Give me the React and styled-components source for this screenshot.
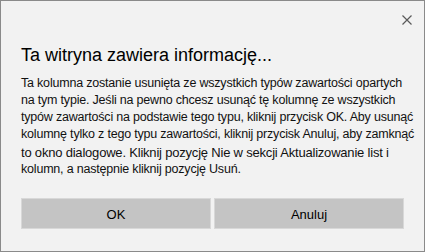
import React from 'react'
import styled, { createGlobalStyle } from 'styled-components'

const GlobalStyle = createGlobalStyle`
  html, body {
    margin: 0;
    padding: 0;
    background: #f2f2f2;
  }
  * {
    box-sizing: border-box;
  }
`

const lines = [
  { text: 'Ta kolumna zostanie usunięta ze wszystkich typów zawartości opartych' },
  { text: 'na tym typie. Jeśli na pewno chcesz usunąć tę kolumnę ze wszystkich' },
  { text: 'typów zawartości na podstawie tego typu, kliknij przycisk OK. Aby usunąć' },
  { text: 'kolumnę tylko z tego typu zawartości, kliknij przycisk Anuluj, aby zamknąć' },
  { text: 'to okno dialogowe. Kliknij pozycję Nie w sekcji Aktualizowanie list i', large: true },
  { text: 'kolumn, a następnie kliknij pozycję Usuń.' },
]

const App = () => {
  return (
    <>
      <GlobalStyle />
      <Dialog>
        <CloseRow>
          <CloseButton aria-label="Zamknij">
            <svg width="10" height="10" viewBox="0 0 10 10">
              <path d="M0.5 0.5 L9.5 9.5 M9.5 0.5 L0.5 9.5" stroke="#5a5a5a" strokeWidth="1.2" />
            </svg>
          </CloseButton>
        </CloseRow>
        <Title>Ta witryna zawiera informację...</Title>
        <Message>
          {lines.map((line, i) => (
            <Line key={i} $large={line.large}>
              {line.text}
            </Line>
          ))}
        </Message>
        <Buttons>
          <Button>OK</Button>
          <Button>Anuluj</Button>
        </Buttons>
      </Dialog>
    </>
  )
}

const Dialog = styled.div`
  width: 425px;
  height: 252px;
  border: 1px solid #8a8a8a;
  background: #f2f2f2;
  padding: 0 20px;
  display: flex;
  flex-direction: column;
  font-family: 'Liberation Sans', Arial, sans-serif;
  color: #000;
`

const CloseRow = styled.div`
  display: flex;
  justify-content: flex-end;
  padding-top: 13px;
  margin-right: -10px;
  height: 42px;
  flex-shrink: 0;
`

const CloseButton = styled.button`
  border: 0;
  background: transparent;
  padding: 1px 2px;
  width: 14px;
  height: 12px;
  display: flex;
  align-items: center;
  justify-content: center;
  cursor: pointer;
`

const Title = styled.h1`
  margin: 0;
  font-size: 18px;
  font-weight: normal;
  line-height: 24px;
`

const Message = styled.div`
  margin: 7.5px 0 0;
  font-size: 12.5px;
  letter-spacing: -0.2px;
  line-height: 17.33px;
  color: #111;
`

const Line = styled.div`
  white-space: nowrap;
  font-size: ${(p) => (p.$large ? '13px' : 'inherit')};
`

const Buttons = styled.div`
  display: grid;
  grid-template-columns: 1fr 1fr;
  gap: 3px;
  margin-top: 19.5px;
`

const Button = styled.button`
  height: 31px;
  border: 1px solid #d8d8d8;
  background: #c4c4c4;
  font-family: 'Liberation Sans', Arial, sans-serif;
  font-size: 13px;
  color: #000;
  padding: 3px 0 0;
  cursor: pointer;
`

export default App
